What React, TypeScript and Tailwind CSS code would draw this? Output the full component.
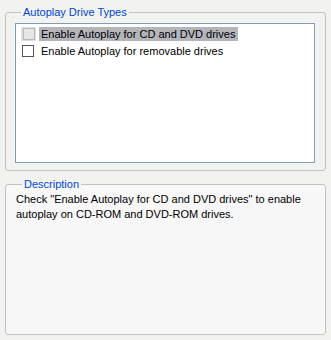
export default function App() {
  return (
    <div
      className="w-[331px] h-[340px] bg-[#f2f2f0] px-[5px] pt-[6px] text-[11px] leading-[13px] text-black"
      style={{ fontFamily: '"Liberation Sans", Arial, sans-serif' }}
    >
      <fieldset className="h-[165px] rounded-[3px] border border-[#c2c2c2] pl-[9px] pr-[10px] pb-[6px]">
        <legend className="ml-[6px] px-[2px] text-[#0046d5]">Autoplay Drive Types</legend>
        <div className="mt-[4px] h-[140px] border border-[#7f9db9] bg-white pt-[3px]">
          <div className="flex h-[14px] items-center">
            <span className="ml-[5px] flex h-[14px] w-[15px] items-center justify-center bg-[#dedede]">
              <span className="h-[12px] w-[12px] border border-[#b9b9b9] bg-[#e6e6e6]" />
            </span>
            <span className="ml-[3px] bg-[#b4b4bb] pl-[2px] pr-[3px] leading-[14px]">
              Enable Autoplay for CD and DVD drives
            </span>
          </div>
          <div className="mt-[3px] flex h-[14px] items-center">
            <span className="ml-[6px] h-[12px] w-[12px] border border-[#555555] bg-white" />
            <span className="ml-[7px]">Enable Autoplay for removable drives</span>
          </div>
        </div>
      </fieldset>
      <fieldset className="mt-[7px] h-[157px] rounded-[3px] border border-[#c2c2c2] bg-[#f7f7f7] pl-[10px] pr-[10px]">
        <legend className="ml-[6px] px-[2px] text-[#0046d5]">Description</legend>
        <p className="mt-[1px] leading-[15px]">
          Check "Enable Autoplay for CD and DVD drives" to enable autoplay on CD-ROM and DVD-ROM drives.
        </p>
      </fieldset>
    </div>
  );
}
